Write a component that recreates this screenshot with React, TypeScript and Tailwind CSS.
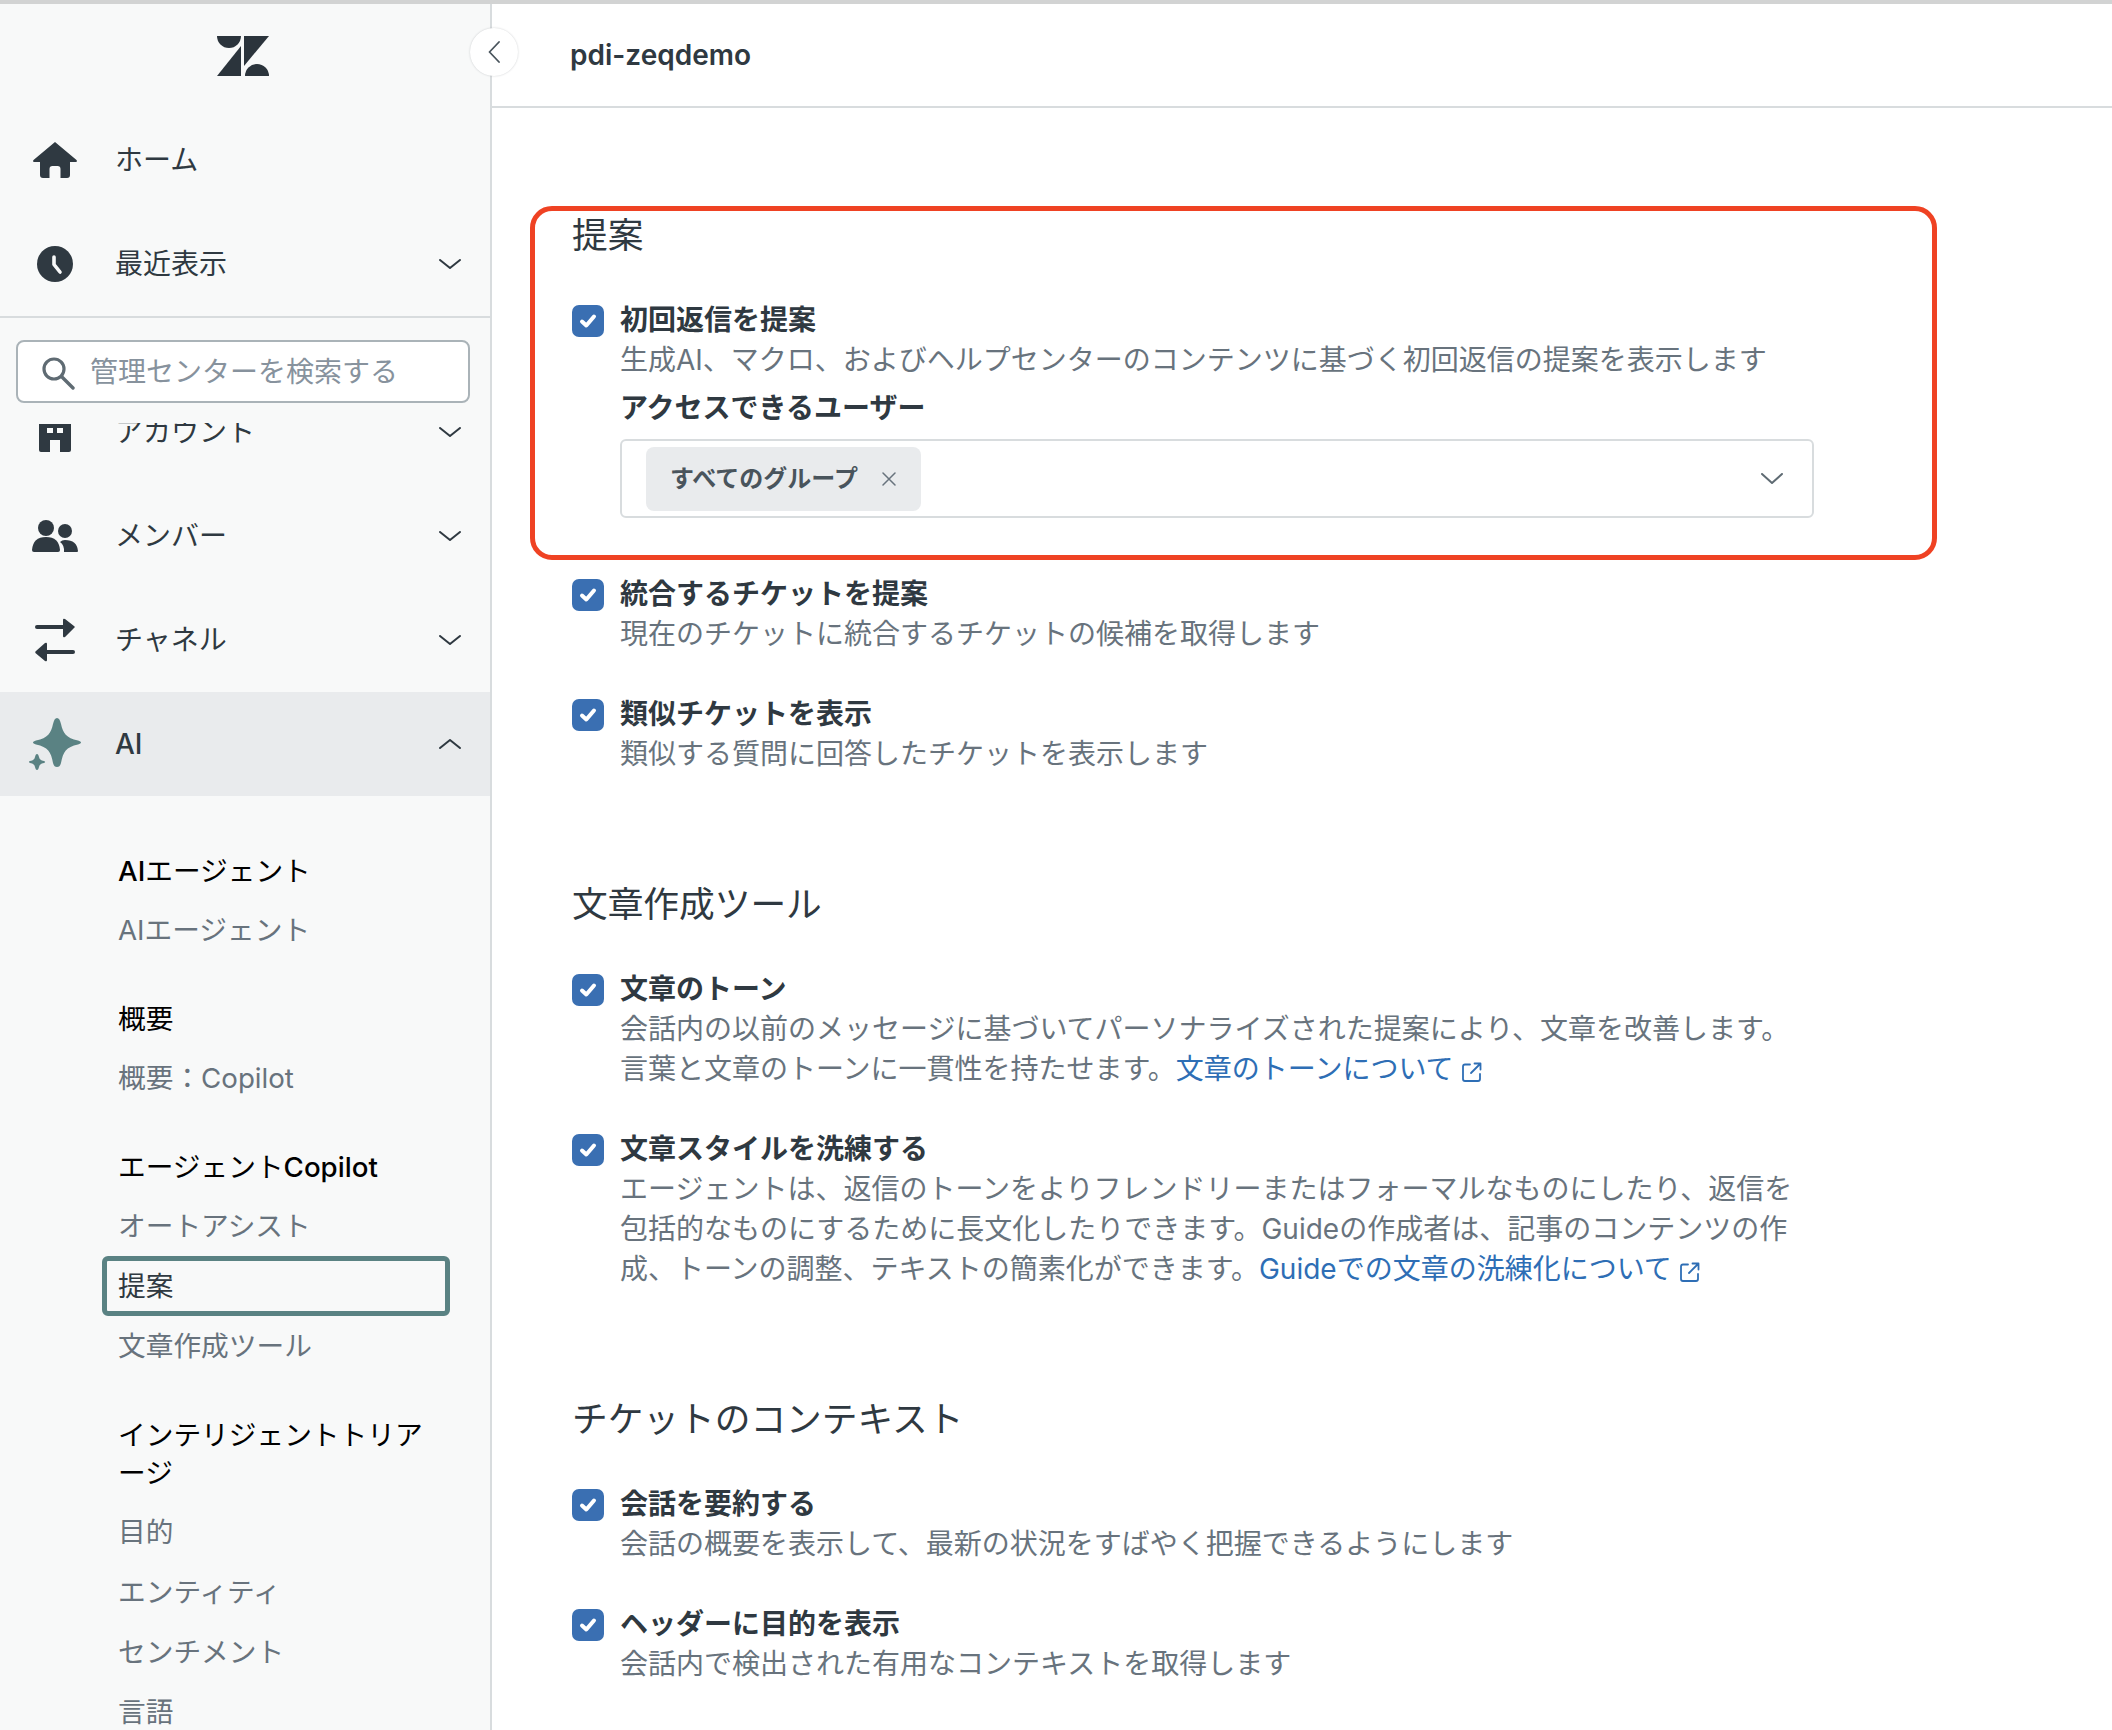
import React from 'react';

const Chevron = ({ up = false }: { up?: boolean }) => (
  <svg width="22" height="10" viewBox="0 0 22 10" fill="none" className={up ? 'ml-auto rotate-180' : 'ml-auto'}>
    <path d="M1 1L11 9L21 1" stroke="#2f3941" strokeWidth="2" strokeLinecap="round" strokeLinejoin="round" />
  </svg>
);

const ZendeskLogo = () => (
  <svg width="52" height="40" viewBox="0 0 52 40" fill="#2b343c">
    <path d="M0 0H24A12 12 0 0 1 0 0Z" />
    <path d="M27 0H52L27 30Z" />
    <path d="M0 40L24 10V40Z" />
    <path d="M28 40A12 12 0 0 1 52 40Z" />
  </svg>
);

const HomeIcon = () => (
  <svg width="44" height="36" viewBox="0 0 44 36" fill="#2f3941">
    <path d="M22 0L43.5 18Q44.5 19.7 43 20H37V33Q37 36 34 36H27.5V27Q27.5 24 24.5 24H19.5Q16.5 24 16.5 27V36H10Q7 36 7 33V20H1Q-.5 19.7 .5 18Z" />
  </svg>
);

const ClockIcon = () => (
  <svg width="36" height="36" viewBox="0 0 36 36">
    <circle cx="18" cy="18" r="18" fill="#2f3941" />
    <path d="M17 11V18.5L23 26" stroke="#f8f9f9" strokeWidth="3.6" strokeLinecap="round" strokeLinejoin="round" fill="none" />
  </svg>
);

const BuildingIcon = () => (
  <svg width="32" height="28" viewBox="0 0 32 28" className="mt-[12px]">
    <path
      fillRule="evenodd"
      fill="#2f3941"
      d="M0 0H32V26Q32 28 30 28H21V16H11V28H2Q0 28 0 26ZM8 4V9H14V4ZM18 4V9H24V4Z"
    />
  </svg>
);

const MembersIcon = () => (
  <svg width="46" height="32" viewBox="0 0 46 32" fill="#2f3941">
    <circle cx="14" cy="8" r="8" />
    <path d="M0 30Q1 17 14 17Q27 17 28 30Q28 32 26 32H2Q0 32 0 30Z" />
    <circle cx="33" cy="11" r="7" />
    <path d="M33 20Q45 20 46 31Q46 32 45 32H32Q32.500 25 28 22Q30 20 33 20Z" />
  </svg>
);

const ChannelsIcon = () => (
  <svg width="40" height="44" viewBox="0 0 40 44" fill="#2f3941">
    <rect x="0" y="7" width="30" height="4" rx="2" />
    <path d="M28 2Q28 0 30 1L39 8Q40.500 9 39 10L30 19Q28 20 28 18Z" />
    <rect x="10" y="32" width="30" height="4" rx="2" />
    <path d="M12 26Q12 24 10 25L1 33Q-.5 34 1 35.500L10 43Q12 44 12 42Z" />
  </svg>
);

const SparkleIcon = () => (
  <svg width="54" height="52" viewBox="0 0 54 52" fill="#5a8283">
    <path d="M28 0C30 0 31 2 32 6C34 15 37 20 49 22.500C53 23.500 53 25.500 49 26.500C37 29 34 34 32 45C31 48 30 49 28 49C26 49 25 48 24 45C22 34 19 29 7 26.500C3 25.500 3 23.500 7 22.500C19 20 22 15 24 6C25 2 26 0 28 0Z" />
    <path d="M8 36C9 36 9.500 37 10 39C10.500 41 11.500 42.500 15 43C16.500 43.500 16.500 44.500 15 45C11.500 45.500 10.500 47 10 49C9.500 51 9 52 8 52C7 52 6.500 51 6 49C5.500 47 4.500 45.500 1 45C-.5 44.500 -.5 43.500 1 43C4.500 42.500 5.500 41 6 39C6.500 37 7 36 8 36Z" />
  </svg>
);

const CheckBox = () => (
  <span className="mt-[5px] flex h-[32px] w-[32px] shrink-0 items-center justify-center rounded-[7px] bg-[#3a6fb2]">
    <svg width="32" height="32" viewBox="0 0 32 32" fill="none">
      <path d="M10 16.500L14.300 20.500L22 11.500" stroke="#fff" strokeWidth="4" strokeLinecap="round" strokeLinejoin="round" />
    </svg>
  </span>
);

const ExternalLink = () => (
  <svg width="20" height="20" viewBox="0 0 20 20" fill="none" className="ml-[8px] inline-block align-[-3px]">
    <path d="M8 2.500H3Q1 2.500 1 4.500V17Q1 19 3 19H16Q18 19 18 17V12" stroke="#2e6eb5" strokeWidth="1.800" strokeLinecap="round" />
    <path d="M9 11L18 2M12.500 1.500H18.500V7.500" stroke="#2e6eb5" strokeWidth="1.800" strokeLinecap="round" strokeLinejoin="round" />
  </svg>
);

const topRows = [
  { label: 'アカウント', icon: <BuildingIcon /> },
  { label: 'メンバー', icon: <MembersIcon /> },
  { label: 'チャネル', icon: <ChannelsIcon /> },
];

const NavRow = ({ icon, children, chevron }: { icon: React.ReactNode; children: React.ReactNode; chevron?: boolean }) => (
  <div className="flex h-[104px] shrink-0 items-center pr-[29px] text-[#2f3941]">
    <span className="flex w-[115px] shrink-0 justify-center pr-[5px]">{icon}</span>
    <span>{children}</span>
    {chevron && <Chevron />}
  </div>
);

const SubHeading = ({ children }: { children: React.ReactNode }) => (
  <div className="mb-[10px] w-[320px] leading-[38px] text-black">{children}</div>
);

const SubItem = ({ children }: { children: React.ReactNode }) => (
  <div className="flex h-[60px] items-center text-[#68737d]">{children}</div>
);

const Sidebar = () => (
  <aside className="flex w-[492px] shrink-0 flex-col overflow-hidden border-r-2 border-[#d8dcde] bg-[#f8f9f9]">
    <div className="flex h-[104px] shrink-0 items-center justify-center pr-[4px]">
      <ZendeskLogo />
    </div>
    <NavRow icon={<HomeIcon />}>ホーム</NavRow>
    <NavRow icon={<ClockIcon />} chevron>最近表示</NavRow>

    <div className="h-[107px] shrink-0 border-t-2 border-[#d8dcde] pl-[16px] pr-[20px] pt-[22px]">
      <div className="flex h-[63px] items-center rounded-[8px] border-2 border-[#aab3b8] bg-white pl-[23px] text-[#87929d]">
        <svg width="34" height="34" viewBox="0 0 34 34" fill="none" className="mr-[15px] mt-[2px] shrink-0">
          <circle cx="13" cy="13" r="10" stroke="#5f6b73" strokeWidth="3.200" />
          <path d="M21 21L32 32" stroke="#5f6b73" strokeWidth="3.400" strokeLinecap="round" />
        </svg>
        管理センターを検索する
      </div>
    </div>

    <div className="min-h-0 flex-1 overflow-hidden">
      <div className="-mt-[43px]">
        {topRows.map((row) => (
          <NavRow key={row.label} icon={row.icon} chevron>
            {row.label}
          </NavRow>
        ))}
        <div className="flex h-[104px] items-center bg-[#e9ebed] pr-[29px] text-[#2f3941]">
          <span className="flex w-[115px] shrink-0 justify-center pr-[3px]">
            <SparkleIcon />
          </span>
          <span className="font-medium">AI</span>
          <Chevron up />
        </div>

        <div className="pl-[118px] pt-[56px] text-[27.7px]">
          <SubHeading>
            <span className="font-medium">AI</span>エージェント
          </SubHeading>
          <SubItem>AIエージェント</SubItem>

          <div className="mt-[40px]">
            <SubHeading>概要</SubHeading>
            <SubItem>概要：Copilot</SubItem>
          </div>

          <div className="mt-[40px]">
            <SubHeading>
              エージェント<span className="font-medium">Copilot</span>
            </SubHeading>
            <SubItem>オートアシスト</SubItem>
            <div className="-ml-[16px] mr-[40px] flex h-[60px] items-center rounded-[6px] border-[5px] border-[#5a8283] pl-[11px] text-[#2f3941]">
              提案
            </div>
            <SubItem>文章作成ツール</SubItem>
          </div>

          <div className="mt-[40px]">
            <SubHeading>インテリジェントトリアージ</SubHeading>
            <SubItem>目的</SubItem>
            <SubItem>エンティティ</SubItem>
            <SubItem>センチメント</SubItem>
            <SubItem>言語</SubItem>
          </div>
        </div>
      </div>
    </div>
  </aside>
);

const SettingItem = ({ title, children }: { title: string; children: React.ReactNode }) => (
  <div className="flex gap-[16px]">
    <CheckBox />
    <div className="w-[1175px]">
      <div className="font-semibold leading-[40px] text-[#2f3941]">{title}</div>
      <div className="leading-[40px] text-[#68737d]">{children}</div>
    </div>
  </div>
);

const SectionTitle = ({ children }: { children: React.ReactNode }) => (
  <h2 className="mb-[41px] text-[35.7px] font-normal leading-[48px] text-[#2f3941]">{children}</h2>
);

const DocLink = ({ children }: { children: React.ReactNode }) => (
  <span className="text-[#2e6eb5]">
    {children}
    <ExternalLink />
  </span>
);

const Main = () => (
  <main className="relative min-w-0 flex-1">
    <header className="flex h-[104px] items-center border-b-2 border-[#d8dcde] pl-[78px] font-semibold text-[#2f3941]">
      pdi-zeqdemo
    </header>

    <div className="pl-[80px] pt-[103px]">
      <SectionTitle>提案</SectionTitle>
      <div className="flex flex-col gap-[40px]">
        <div className="pb-[16px]">
          <SettingItem title="初回返信を提案">
            生成AI、マクロ、およびヘルプセンターのコンテンツに基づく初回返信の提案を表示します
          </SettingItem>
          <div className="pl-[48px]">
            <div className="mt-[8px] font-semibold leading-[40px] text-[#2f3941]">アクセスできるユーザー</div>
            <div className="mt-[11px] flex h-[79px] w-[1194px] items-center rounded-[6px] border-2 border-[#d8dcde] bg-white pl-[24px] pr-[29px]">
              <span className="flex h-[64px] w-[275px] items-center rounded-[8px] bg-[#e9ebed] pl-[24px] text-[24px] font-semibold text-[#49545c]">
                すべてのグループ
                <svg width="14" height="14" viewBox="0 0 14 14" fill="none" className="ml-[24px]">
                  <path d="M1 1L13 13M13 1L1 13" stroke="#68737d" strokeWidth="1.500" strokeLinecap="round" />
                </svg>
              </span>
              <svg width="22" height="11" viewBox="0 0 22 11" fill="none" className="ml-auto">
                <path d="M1 1L11 10L21 1" stroke="#5f6b73" strokeWidth="2" strokeLinecap="round" strokeLinejoin="round" />
              </svg>
            </div>
          </div>
        </div>
        <SettingItem title="統合するチケットを提案">現在のチケットに統合するチケットの候補を取得します</SettingItem>
        <SettingItem title="類似チケットを表示">類似する質問に回答したチケットを表示します</SettingItem>
      </div>

      <div className="mt-[106px]">
        <SectionTitle>文章作成ツール</SectionTitle>
        <div className="flex flex-col gap-[40px]">
          <SettingItem title="文章のトーン">
            会話内の以前のメッセージに基づいてパーソナライズされた提案により、文章を改善します。言葉と文章のトーンに一貫性を持たせます。
            <DocLink>文章のトーンについて</DocLink>
          </SettingItem>
          <SettingItem title="文章スタイルを洗練する">
            エージェントは、返信のトーンをよりフレンドリーまたはフォーマルなものにしたり、返信を包括的なものにするために長文化したりできます。Guideの作成者は、記事のコンテンツの作成、トーンの調整、テキストの簡素化ができます。
            <DocLink>Guideでの文章の洗練化について</DocLink>
          </SettingItem>
        </div>
      </div>

      <div className="mt-[106px]">
        <SectionTitle>チケットのコンテキスト</SectionTitle>
        <div className="flex flex-col gap-[40px]">
          <SettingItem title="会話を要約する">会話の概要を表示して、最新の状況をすばやく把握できるようにします</SettingItem>
          <SettingItem title="ヘッダーに目的を表示">会話内で検出された有用なコンテキストを取得します</SettingItem>
        </div>
      </div>
    </div>

    {/* annotation */}
    <div className="pointer-events-none absolute left-[38px] top-[202px] h-[354px] w-[1407px] rounded-[22px] border-[5px] border-[#ef4223]" />
  </main>
);

export default function App() {
  return (
    <div className="relative flex h-screen flex-col overflow-hidden bg-white font-['Inter','Noto_Sans_CJK_JP',sans-serif] text-[28px] leading-[40px]">
      <div className="h-[4px] shrink-0 bg-[#d2d3d3]" />
      <div className="flex min-h-0 flex-1">
        <Sidebar />
        <Main />
      </div>
      <button className="absolute left-[470px] top-[28px] flex h-[48px] w-[48px] items-center justify-center rounded-full bg-white shadow-[0_0_2px_rgba(47,57,65,0.25)]">
        <svg width="12" height="22" viewBox="0 0 12 22" fill="none">
          <path d="M11 1L1.500 11L11 21" stroke="#49545c" strokeWidth="1.800" strokeLinecap="round" strokeLinejoin="round" />
        </svg>
      </button>
    </div>
  );
}
